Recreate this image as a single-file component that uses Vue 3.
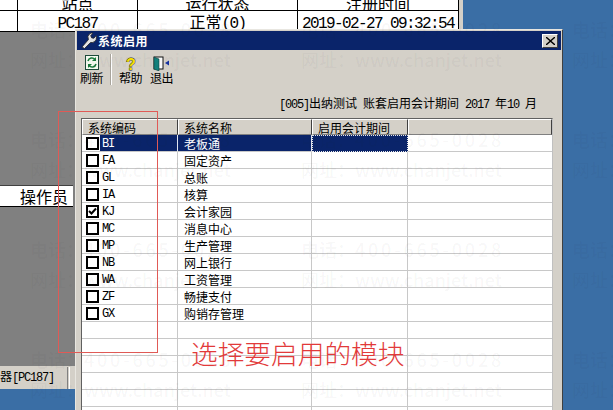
<template>
  <div class="desk">
    <!-- 后面的主窗口 -->
    <div class="back">
      <div class="back-table">
        <div class="back-row head">
          <span class="c0"></span><span class="c1">站点</span><span class="c2">运行状态</span><span class="c3">注册时间</span>
        </div>
        <div class="back-row">
          <span class="c0"></span><span class="c1"><i class="mono">PC187</i></span><span class="c2">正常<i class="mono">(0)</i></span><span class="c3"><i class="mono">2019-02-27 09:32:54</i></span>
        </div>
      </div>
      <div class="back-gray">
        <div class="oper">操作员</div>
      </div>
      <div class="status">
        <div class="tab">器<i class="mono">[PC187]</i></div>
        <div class="tab-end"></div>
      </div>
    </div>

    <!-- 系统启用 对话框 -->
    <div class="dialog">
      <div class="title">
        <svg class="wrench" width="17" height="17" viewBox="0 0 16 17">
          <path d="M1.500 15l6.500-7.500a4.500 4.500 0 0 1 1-5.500l1.500-1 2 .1-2.300 2.600 1 2.200 2.300.3 2.200-2.700.3 1.800a5 5 0 0 1-6 5.200L4 16.500z" fill="#e4e4e4" stroke="#222" stroke-width=".8"/>
        </svg>
        <span class="title-text">系统启用</span>
        <button class="close">
          <svg width="9" height="8" viewBox="0 0 9 8"><path d="M1 0l3.500 3L8 0h1v1L5.500 4 9 7v1H8L4.500 5 1 8H0V7l3.500-3L0 1V0z" fill="#000"/></svg>
        </button>
      </div>

      <div class="toolbar">
        <div class="tool t-refresh">
          <svg width="14" height="15" viewBox="0 0 14 15">
            <rect x=".5" y=".5" width="13" height="14" fill="#f4fbf0" stroke="#1d4a3a"/>
            <path d="M3 6a4 4 0 0 1 7-1.500M11 9a4 4 0 0 1-7 1.500" fill="none" stroke="#1a7a3c" stroke-width="1.600"/>
            <path d="M11 2v4H7zM3 13V9h4z" fill="#1a7a3c"/>
          </svg>
          <span>刷新</span>
        </div>
        <div class="sep"></div>
        <div class="tool t-help">
          <svg width="14" height="15" viewBox="0 0 14 15">
            <text x="7" y="14" text-anchor="middle" class="qm">?</text>
          </svg>
          <span>帮助</span>
        </div>
        <div class="tool t-exit">
          <svg width="17" height="15" viewBox="0 0 17 15">
            <rect x="1" y="1" width="9" height="12" fill="#fff" stroke="#111"/>
            <path d="M1 1l5 2v12l-5-2z" fill="#12807c" stroke="#0d3f3f" stroke-width=".6"/>
            <path d="M16 4.500v5l-4-2.500z" fill="#1530a0"/>
          </svg>
          <span>退出</span>
        </div>
      </div>

      <div class="info"><i class="mono">[005]</i>出纳测试<i class="mono">{{ ' ' }}</i>账套启用会计期间<i class="mono">{{ ' 2017 ' }}</i>年<i class="mono">{{ '10 ' }}</i>月</div>

      <div class="grid">
        <div class="grid-head">
          <div class="h h1">系统编码</div>
          <div class="h h2">系统名称</div>
          <div class="h h3">启用会计期间</div>
          <div class="h h4"></div>
        </div>
        <div v-for="(m, i) in rows" :key="i" class="row" :class="{ sel: i === 0 }">
          <div class="cell c-code">
            <span v-if="m.code" class="box">
              <svg v-if="m.on" width="9" height="9" viewBox="0 0 9 9"><path d="M1 4l2.500 2.500L8 1.500" fill="none" stroke="#000" stroke-width="2"/></svg>
            </span>
            <span class="code mono">{{ m.code }}</span>
          </div>
          <div class="cell c-name">{{ m.name }}</div>
          <div class="cell c-date"></div>
          <div class="cell c-rest"></div>
        </div>
      </div>
    </div>

    <!-- 水印 -->
    <div class="marks">
      <div v-for="n in 12" :key="n" class="mark">
        <div>电话：<span class="phone">400-665-0028</span></div>
        <div>网址：www.chanjet.net</div>
      </div>
    </div>

    <!-- 红色标注 -->
    <div class="red-box"></div>
    <div class="red-text">选择要启用的模块</div>
  </div>
</template>

<script setup>
const modules = [
  { code: 'BI', name: '老板通' },
  { code: 'FA', name: '固定资产' },
  { code: 'GL', name: '总账' },
  { code: 'IA', name: '核算' },
  { code: 'KJ', name: '会计家园', on: true },
  { code: 'MC', name: '消息中心' },
  { code: 'MP', name: '生产管理' },
  { code: 'NB', name: '网上银行' },
  { code: 'WA', name: '工资管理' },
  { code: 'ZF', name: '畅捷支付' },
  { code: 'GX', name: '购销存管理' }
]
// 下面补空行
const rows = [...modules, ...Array.from({ length: 6 }, () => ({ code: '', name: '' }))]
</script>

<style>
html, body {
  margin: 0;
  overflow: hidden;
}
</style>

<style scoped>
.desk {
  position: relative;
  width: 613px;
  height: 410px;
  overflow: hidden;
  background: #3a6ea5;
  font-family: "Noto Sans CJK SC", "Liberation Sans", sans-serif;
  font-size: 12px;
  color: #000;
}
/* 12px 等宽，压到 6px 一个字符 */
.mono {
  font-family: "Liberation Mono", monospace;
  font-style: normal;
  font-size: 12px;
  letter-spacing: -1.2px;
  white-space: pre;
}

/* 后面的窗口 */
.back {
  width: 463px;
  height: 389px;
  background: #d4d0c8;
  display: flex;
  flex-direction: column;
}
.back-table {
  height: 32px;
  width: 459px;
  background: #fff;
  font-size: 16px;
  overflow: hidden;
  border-right: 1px solid #000;
  box-sizing: border-box;
  border-bottom: 1px solid #000;
}
.back-row {
  display: flex;
  height: 21px;
  line-height: 21px;
  border-top: 1px solid #000;
  box-sizing: border-box;
}
.back-row .mono {
  font-size: 16px;
  letter-spacing: -1.6px;
}
.back-row.head {
  height: 11px;
  line-height: 6px;
  border-top: none;
  border-bottom: 1px solid #000;
  margin-bottom: -1px;
  align-items: flex-end;
}
.back-row > span {
  text-align: center;
  white-space: nowrap;
  overflow: hidden;
  box-sizing: border-box;
  height: 100%;
}
.c0 { width: 18px; border-right: 1px solid #000; }
.c1 { width: 120px; border-right: 1px solid #000; }
.c2 { width: 160px; border-right: 1px solid #000; }
.c3 { flex: 1; }
.back-gray {
  width: 459px;
  flex: 1;
  background: #808080;
  padding-top: 153px;
  box-sizing: border-box;
}
.oper {
  width: 73px;
  height: 22px;
  background: #fff;
  border-top: 1px solid #404040;
  border-bottom: 1px solid #000;
  box-sizing: border-box;
  padding-right: 5px;
  text-align: right;
  font-size: 16px;
  line-height: 20px;
}
.status {
  height: 23px;
  display: flex;
  gap: 1px;
  background: #d4d0c8;
  padding-top: 1px;
  box-sizing: border-box;
}
.tab {
  width: 68px;
  text-align: right;
  font-size: 12px;
  line-height: 17px;
  white-space: nowrap;
  overflow: hidden;
  border-right: 1px solid #808080;
  box-sizing: border-box;
  padding-right: 13px;
}
.tab-end {
  width: 8px;
  border-left: 1px solid #fff;
}

/* 对话框 */
.dialog {
  position: absolute;
  left: 75px;
  top: 29px;
  width: 488px;
  height: 400px;
  box-sizing: border-box;
  background: #d4d0c8;
  border: 1px solid;
  border-color: #e8e6e0 #404040 #404040 #e8e6e0;
  padding: 1px;
}
.title {
  height: 19px;
  background: #0a246a;
  display: flex;
  align-items: center;
  padding: 0 3px;
  color: #fff;
}
.wrench {
  flex: none;
}
.title-text {
  margin-left: 1px;
  font-weight: 700;
  font-size: 12px;
  letter-spacing: .5px;
  flex: 1;
}
.close {
  width: 16px;
  height: 14px;
  padding: 0;
  background: #d4d0c8;
  border: 1px solid;
  border-color: #fff #404040 #404040 #fff;
  display: flex;
  align-items: center;
  justify-content: center;
}
.toolbar {
  display: flex;
  height: 36px;
  margin-top: 4px;
  padding-left: 3px;
  align-items: flex-start;
}
.tool {
  display: flex;
  flex-direction: column;
  align-items: center;
  width: 23px;
}
.tool svg {
  display: block;
  height: 15px;
  margin-bottom: -1px;
}
.tool span {
  line-height: 17px;
  white-space: nowrap;
  letter-spacing: -.5px;
}
.t-refresh {
  padding-top: 1px;
}
.t-help,
.t-exit {
  padding-top: 2px;
}
.t-help span,
.t-exit span {
  margin-top: -1px;
}
.t-exit {
  margin-left: 8px;
}
.qm {
  font: 700 16px "Liberation Sans", sans-serif;
  fill: #f4e000;
  stroke: #222;
  stroke-width: .8px;
  paint-order: stroke;
}
.sep {
  width: 1px;
  height: 31px;
  margin: 0 7px;
  background: #a8a49c;
  border-right: 1px solid #fff;
}
.info {
  margin-top: 4px;
  height: 17px;
  line-height: 17px;
  text-align: right;
  padding-right: 24px;
  white-space: nowrap;
  font-size: 12px;
}

/* 表格 */
.grid {
  margin: 7px 0 0 4px;
  width: 472px;
  height: 300px;
  box-sizing: border-box;
  background: #fff;
  border-left: 1px solid #606060;
  border-top: 1px solid #606060;
  border-right: 1px solid #c0c0c0;
  overflow: hidden;
}
.grid-head,
.row {
  display: flex;
}
.grid-head {
  height: 16px;
}
.h {
  box-sizing: border-box;
  background: #d4d0c8;
  border: 1px solid;
  border-color: #fff #404040 #808080 #fff;
  line-height: 15px;
  padding-left: 5px;
  white-space: nowrap;
}
.h1, .c-code { width: 96px; }
.h2, .c-name { width: 134px; }
.h3, .c-date { width: 96px; }
.h4, .c-rest { flex: 1; }
.row {
  height: 17px;
}
.cell {
  box-sizing: border-box;
  height: 17px;
  border-right: 1px solid #c8c8c8;
  border-bottom: 1px solid #c8c8c8;
  line-height: 18px;
}
.c-rest {
  border-right: none;
}
.c-code {
  display: flex;
  align-items: center;
  padding-left: 4px;
}
.c-name {
  padding-left: 6px;
  white-space: nowrap;
}
.box {
  box-sizing: border-box;
  width: 13px;
  height: 13px;
  border: 2px solid #000;
  background: #fff;
  margin-top: 1px;
  flex: none;
  display: flex;
  align-items: center;
  justify-content: center;
}
.code {
  height: 16px;
  line-height: 19px;
  margin-left: 1px;
  padding-left: 2px;
  flex: 1;
}
.row.sel .code {
  background: #0a246a;
  color: #fff;
}
.row.sel .c-code {
  border-right-color: #dfe4f0;
}
.row.sel .c-name,
.row.sel .c-date {
  background: #0a246a;
  color: #fff;
  border-right-color: #dfe4f0;
}
.row.sel .c-date {
  border: 1px dotted #e8e8e8;
}

/* 水印 */
.marks {
  position: absolute;
  left: 30px;
  top: 14px;
  display: grid;
  grid-template-columns: repeat(3, 271px);
  grid-auto-rows: 110px;
  pointer-events: none;
}
.mark {
  color: rgba(40, 40, 40, .045);
  font-family: "Noto Sans CJK SC", sans-serif;
  font-weight: 500;
  font-size: 18px;
  line-height: 30px;
  white-space: nowrap;
}
.phone {
  letter-spacing: 2.800px;
}

/* 红色标注 */
.red-box {
  position: absolute;
  left: 58px;
  top: 111px;
  width: 100px;
  height: 242px;
  box-sizing: border-box;
  border: 1px solid #e05a56;
}
.red-text {
  position: absolute;
  left: 191px;
  top: 334px;
  font-size: 26.7px;
  line-height: 38px;
  font-weight: 300;
  color: #e23a3a;
  white-space: nowrap;
}
</style>
